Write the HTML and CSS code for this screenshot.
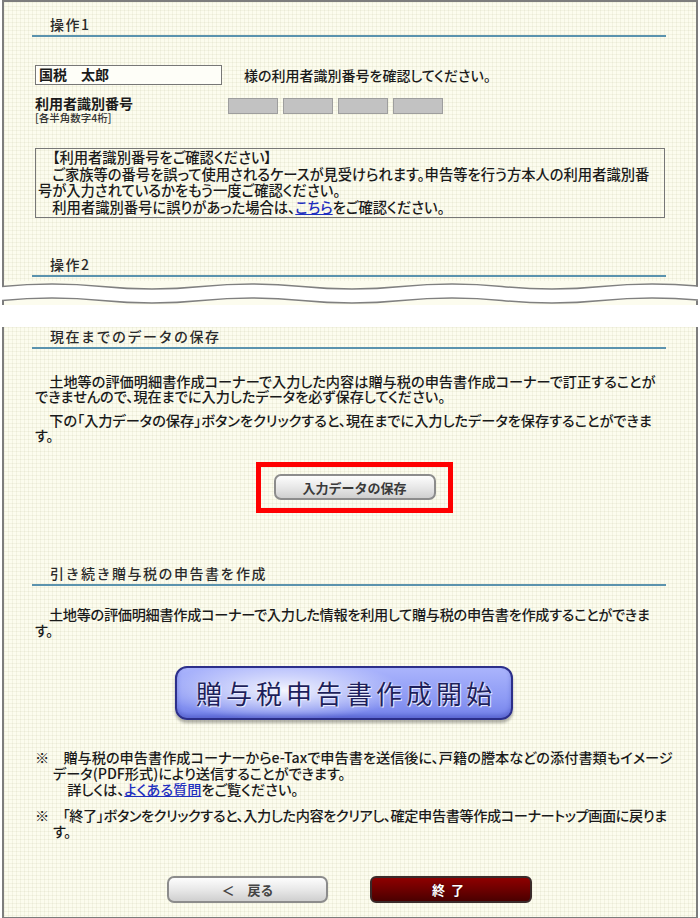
FILE: index.html
```html
<!DOCTYPE html>
<html lang="ja">
<head>
    <meta charset="UTF-8">
    <meta name="viewport" content="width=device-width, initial-scale=1.0">
    <title>贈与税 申告書作成</title>
    <link rel="stylesheet" href="styles.css">
</head>
<body>
    <div class="page">
        <!-- 操作1 / 操作2 -->
        <section class="sheet sheet-top">
            <h2 class="step step-first">操作1</h2>
            <div class="name-row">
                <div class="name-box">国税　太郎</div>
                <span class="name-text">様の利用者識別番号を確認してください。</span>
            </div>
            <div class="id-row">
                <div class="id-label">
                    <div class="id-title">利用者識別番号</div>
                    <div class="id-hint">[各半角数字4桁]</div>
                </div>
                <div class="id-boxes">
                    <span class="id-box"></span>
                    <span class="id-box"></span>
                    <span class="id-box"></span>
                    <span class="id-box"></span>
                </div>
            </div>
            <div class="notice">
                　【利用者識別番号をご確認ください】<br>
                　ご家族等の番号を誤って使用されるケースが見受けられます。申告等を行う方本人の利用者識別番<br>
                号が入力されているかをもう一度ご確認ください。<br>
                　利用者識別番号に誤りがあった場合は、<a href="#">こちら</a>をご確認ください。
            </div>
            <h2 class="step step-second">操作2</h2>
        </section>

        <!-- page break -->
        <svg class="tear" viewBox="0 0 696 24" preserveAspectRatio="none">
            <path class="tear-fill" d="M0 0 L0 5.5 Q50 0.5 100 5.5 T200 5.5 T300 5.5 T400 5.5 T500 5.5 T600 5.5 T700 5.5 L700 0 Z"/>
            <path class="tear-fill" d="M0 19.5 Q50 14.5 100 19.5 T200 19.5 T300 19.5 T400 19.5 T500 19.5 T600 19.5 T700 19.5 L700 24 L0 24 Z"/>
            <path class="tear-line" d="M0 5.5 Q50 0.5 100 5.5 T200 5.5 T300 5.5 T400 5.5 T500 5.5 T600 5.5 T700 5.5"/>
            <path class="tear-line" d="M0 19.5 Q50 14.5 100 19.5 T200 19.5 T300 19.5 T400 19.5 T500 19.5 T600 19.5 T700 19.5"/>
            <rect class="tear-side" x="0" y="0" width="2" height="5.5"/>
            <rect class="tear-side" x="694" y="0" width="2" height="5.5"/>
            <rect class="tear-side" x="0" y="19.5" width="2" height="4.5"/>
            <rect class="tear-side" x="694" y="19.5" width="2" height="4.5"/>
        </svg>

        <section class="sheet sheet-bottom">
            <h2 class="step step-save">現在までのデータの保存</h2>
            <p class="text text-first">　土地等の評価明細書作成コーナーで入力した内容は贈与税の申告書作成コーナーで訂正することが<br>できませんので、現在までに入力したデータを必ず保存してください。</p>
            <p class="text">　下の「入力データの保存」ボタンをクリックすると、現在までに入力したデータを保存することができま<br>す。</p>

            <div class="save-wrap">
                <div class="highlight">
                    <button class="btn-gray btn-save">入力データの保存</button>
                </div>
            </div>

            <h2 class="step step-continue">引き続き贈与税の申告書を作成</h2>
            <p class="text text-first text-continue">　土地等の評価明細書作成コーナーで入力した情報を利用して贈与税の申告書を作成することができま<br>す。</p>

            <div class="start-wrap">
                <button class="btn-start">贈与税申告書作成開始</button>
            </div>

            <div class="notes">
                <p class="note">※　贈与税の申告書作成コーナーからe-Taxで申告書を送信後に、戸籍の謄本などの添付書類もイメージ<br>データ(PDF形式)により送信することができます。<br>　詳しくは、<a href="#">よくある質問</a>をご覧ください。</p>
                <p class="note note-tight">※　「終了」ボタンをクリックすると、入力した内容をクリアし、確定申告書等作成コーナートップ画面に戻りま<br>す。</p>
            </div>

            <div class="nav">
                <button class="btn-gray btn-back">＜　戻る</button>
                <button class="btn-end">終了</button>
            </div>
        </section>
    </div>
</body>
</html>
```

FILE: styles.css
```css
/* Root Variables */
:root {
    --paper: #fcfcee;
    --frame: #7d7d7d;
    --rule: #5b93ae;
    --ink: #1a1a1a;
    --font: "Noto Sans CJK JP", "Noto Sans", sans-serif;
}

/* Global Styles */
body {
    margin: 0;
    background: #fff;
    font-family: var(--font);
    color: var(--ink);
    overflow: hidden;
}

.page {
    width: 696px;
    margin: 0 2px;
}

.sheet {
    background-color: var(--paper);
    background-image:
        linear-gradient(rgba(190, 190, 150, 0.14) 1px, transparent 1px),
        linear-gradient(90deg, rgba(190, 190, 150, 0.14) 1px, transparent 1px);
    background-size: 4px 4px;
    border-left: 2px solid var(--frame);
    border-right: 2px solid var(--frame);
}

.sheet-top {
    border-top: 2px solid var(--frame);
    padding-bottom: 4px;
}

.sheet-bottom {
    border-bottom: 2px solid var(--frame);
    padding-bottom: 14px;
}

/* Torn edge between the two parts */
.tear {
    display: block;
    width: 696px;
    height: 24px;
}

.tear-fill {
    fill: var(--paper);
}

.tear-line {
    fill: none;
    stroke: #808080;
    stroke-width: 1.5;
}

.tear-side {
    fill: var(--frame);
}

/* Section headings */
.step {
    margin: 0 30px 0 28px;
    padding: 0 0 2px 18px;
    font-size: 14px;
    line-height: 18px;
    font-weight: 500;
    letter-spacing: 1.5px;
    color: #2a2a2a;
    border-bottom: 2px solid var(--rule);
}

.step-first { margin-top: 13px; }
.step-second { margin-top: 37px; }
.step-save { margin-top: 22px; }
.step-continue { margin-top: 51px; }

/* Name row */
.name-row {
    display: flex;
    align-items: center;
    margin: 28px 0 0 31px;
    font-size: 14px;
    font-weight: 500;
}

.name-box {
    box-sizing: border-box;
    width: 187px;
    height: 20px;
    padding-left: 3px;
    border: 1.5px solid #777;
    background: #fefef8;
    font-weight: bold;
    line-height: 17px;
}

.name-text {
    margin-left: 22px;
    font-feature-settings: "palt";
}

/* Identifier row */
.id-row {
    display: flex;
    margin: 10px 0 0 31px;
}

.id-label {
    width: 193px;
}

.id-title {
    font-size: 14px;
    line-height: 16px;
    font-weight: bold;
}

.id-hint {
    margin-top: 1px;
    font-size: 10.5px;
    line-height: 11px;
    font-weight: 500;
    color: #333;
}

.id-boxes {
    display: flex;
    gap: 5px;
    margin-top: 3px;
}

.id-box {
    box-sizing: border-box;
    width: 50px;
    height: 16px;
    background: #c2c2c2;
    border: 1px solid #9e9e9e;
}

/* Notice box */
.notice {
    box-sizing: border-box;
    width: 630px;
    margin: 25px 0 0 31px;
    padding: 0 0 1.5px 2px;
    border: 1.5px solid #777;
    font-size: 14.3px;
    line-height: 16.5px;
    font-weight: 500;
    white-space: nowrap;
    font-feature-settings: "palt";
}

a {
    color: #1f2fbf;
}

/* Paragraphs */
.text {
    margin: 9px 0 0 31px;
    width: 630px;
    font-size: 14.2px;
    line-height: 15px;
    font-weight: 500;
    white-space: nowrap;
    font-feature-settings: "palt";
}

.text-first { margin-top: 25.5px; }
.text-continue { margin-top: 20.5px; line-height: 16px; letter-spacing: -0.3px; }

/* Save button with red marker */
.save-wrap {
    display: flex;
    justify-content: center;
    padding-left: 9px;
    margin-top: 18.5px;
}

.highlight {
    width: 187px;
    height: 41px;
    border: 5px solid #f00;
    display: flex;
    align-items: center;
    justify-content: center;
}

.btn-gray {
    box-sizing: border-box;
    height: 26px;
    border: 2px solid #8c8c8c;
    border-radius: 7px;
    background: linear-gradient(#fdfdfd, #e6e6e6 55%, #cfcfcf);
    font-family: var(--font);
    font-size: 13px;
    font-weight: bold;
    color: #3a3a3a;
    padding: 0;
    cursor: pointer;
}

.btn-save {
    width: 162px;
}

/* Big blue start button */
.start-wrap {
    margin: 27.5px 0 0 171px;
}

.btn-start {
    box-sizing: border-box;
    width: 338px;
    height: 54px;
    padding: 0 0 0 4px;
    border: 2px solid #2c2f8a;
    border-radius: 12px;
    background:
        radial-gradient(ellipse 120px 30px at 32% 45%, rgba(255, 255, 255, 0.9), rgba(255, 255, 255, 0) 100%),
        linear-gradient(#aab4fc, #8e9bf5 60%, #7482ea);
    box-shadow: 0 3px 3px rgba(0, 0, 0, 0.3), inset 0 -3px 4px rgba(40, 50, 160, 0.35);
    font-family: var(--font);
    font-size: 26px;
    letter-spacing: 4px;
    color: #1d1f5c;
    text-shadow: 0 0 2px #fff, 1px 1px 0 #e4e7ff;
    cursor: pointer;
}

/* Notes */
.notes {
    margin: 29px 0 0 31px;
    font-size: 14.2px;
    line-height: 16px;
    font-weight: 500;
    font-feature-settings: "palt";
}

.note {
    margin: 0 0 10px;
    padding-left: 18px;
    text-indent: -18px;
    white-space: nowrap;
}

.note-tight {
    letter-spacing: -0.4px;
}

/* Bottom navigation */
.nav {
    display: flex;
    gap: 42px;
    margin: 37px 0 0 163px;
}

.btn-back {
    width: 161px;
    height: 27px;
    color: #444;
}

.btn-end {
    box-sizing: border-box;
    width: 162px;
    height: 27px;
    border: 2px solid #3a2a2a;
    border-radius: 6px;
    background: linear-gradient(#8e0000, #6a0000 55%, #4a0000);
    font-family: var(--font);
    font-size: 13px;
    font-weight: bold;
    letter-spacing: 6px;
    padding-left: 6px;
    color: #fff;
    text-shadow: 0 0 2px #300;
    cursor: pointer;
}
```
